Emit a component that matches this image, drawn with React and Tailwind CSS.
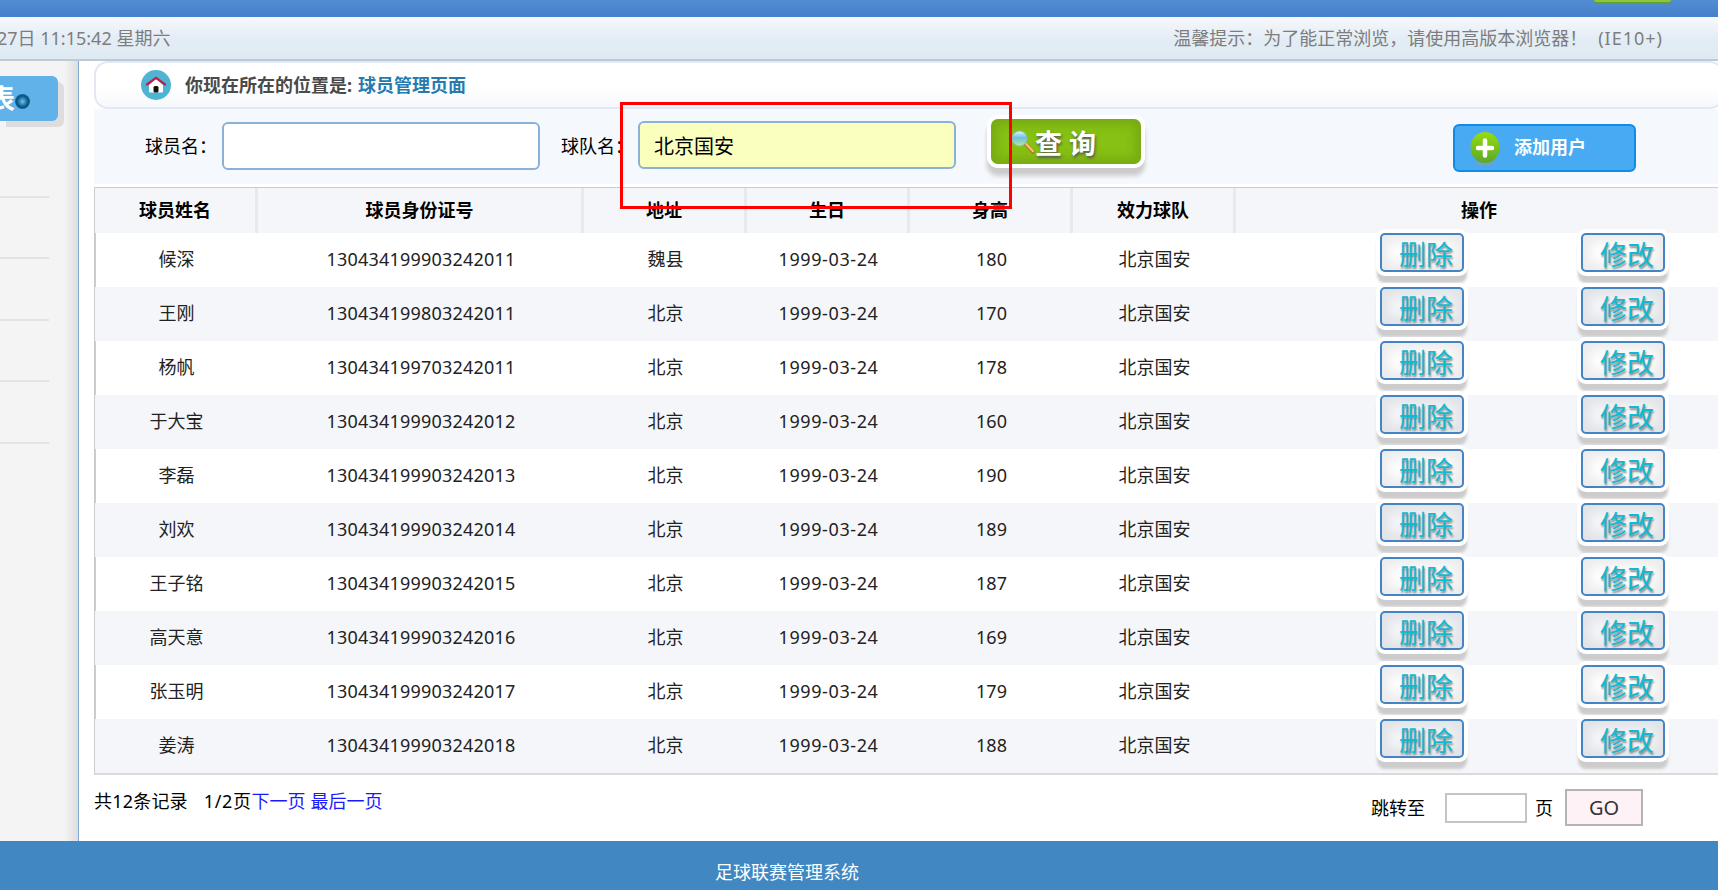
import React, { useState } from 'react';

const players = [
  { name: '候深', idCard: '130434199903242011', address: '魏县', birthday: '1999-03-24', height: 180 },
  { name: '王刚', idCard: '130434199803242011', address: '北京', birthday: '1999-03-24', height: 170 },
  { name: '杨帆', idCard: '130434199703242011', address: '北京', birthday: '1999-03-24', height: 178 },
  { name: '于大宝', idCard: '130434199903242012', address: '北京', birthday: '1999-03-24', height: 160 },
  { name: '李磊', idCard: '130434199903242013', address: '北京', birthday: '1999-03-24', height: 190 },
  { name: '刘欢', idCard: '130434199903242014', address: '北京', birthday: '1999-03-24', height: 189 },
  { name: '王子铭', idCard: '130434199903242015', address: '北京', birthday: '1999-03-24', height: 187 },
  { name: '高天意', idCard: '130434199903242016', address: '北京', birthday: '1999-03-24', height: 169 },
  { name: '张玉明', idCard: '130434199903242017', address: '北京', birthday: '1999-03-24', height: 179 },
  { name: '姜涛', idCard: '130434199903242018', address: '北京', birthday: '1999-03-24', height: 188 },
];

const headers = ['球员姓名', '球员身份证号', '地址', '生日', '身高', '效力球队'];

// Shared column template for the header and the body rows
const rowGrid = 'grid grid-cols-[163px_326px_163px_163px_163px_163px_1fr]';

const HomeIcon = () => (
  <svg className="h-[30px] w-[30px] shrink-0" viewBox="0 0 30 30">
    <circle cx="15" cy="15" r="15" fill="#4fb4d3" />
    <path d="M8 15 15 9l7 6v6.500a1 1 0 0 1-1 1H9a1 1 0 0 1-1-1z" fill="#fff" />
    <path d="M5.200 15 15 7.800l9.800 7.200" fill="none" stroke="#c01f45" strokeWidth="2.200" />
    <rect x="12.500" y="16" width="5" height="6.500" rx="1.500" fill="#111" />
  </svg>
);

const SearchIcon = () => (
  <svg className="h-6 w-6 shrink-0" viewBox="0 0 24 24">
    <defs>
      <linearGradient id="lens" x1="0" y1="0" x2="0" y2="1">
        <stop offset="0" stopColor="#e4f5fd" />
        <stop offset="0.450" stopColor="#6fbfe0" />
        <stop offset="1" stopColor="#b5ec9a" />
      </linearGradient>
    </defs>
    <path d="m15 14.500 7 7.500" stroke="#b9762c" strokeWidth="4" strokeLinecap="round" />
    <path d="m15 13.800 7 7.500" stroke="#f8c573" strokeWidth="2" strokeLinecap="round" />
    <circle cx="8.500" cy="8.500" r="7.500" fill="url(#lens)" stroke="#8fb9c9" strokeWidth="1" />
  </svg>
);

const AddIcon = () => (
  <svg className="h-[34px] w-[30px] shrink-0" viewBox="0 0 30 34">
    <defs>
      <linearGradient id="add" x1="0" y1="0" x2="0" y2="1">
        <stop offset="0" stopColor="#97dc10" />
        <stop offset="1" stopColor="#5aa827" />
      </linearGradient>
    </defs>
    <ellipse cx="15" cy="32.500" rx="12" ry="1.500" fill="#7b9fb8" />
    <ellipse cx="15" cy="16.500" rx="14.500" ry="15.500" fill="url(#add)" />
    <path d="M15 9.500v15M8 17h14" stroke="#fff" strokeWidth="4.500" strokeLinecap="round" />
  </svg>
);

const ActionButton = ({ label }) => (
  <button className="h-[39px] w-[84px] rounded-[5px] border-2 border-[#4484c4] pl-2 text-[27px] leading-[39px] text-[#12b9d3] [text-shadow:1px_2px_2px_#888] shadow-[0_0_0_4px_#fff,0_8px_3px_3px_#ccc,inset_0_0_12px_7px_rgba(0,0,0,0.08)]">
    {label}
  </button>
);

const Sidebar = () => (
  <aside className="flex w-[79px] shrink-0 flex-col border-r border-[#7fa9d4] bg-[linear-gradient(to_right,#f4f4f4_64px,#dcdedd_78px)]">
    <div className="mt-[15px] flex h-[45px] w-[58px] shrink-0 items-center justify-end rounded-r-[6px] bg-[#60b2e8] pr-[28px] text-[27px] font-bold text-white shadow-[6px_6px_0_#dddddd]">
      <span>表</span>
      <span className="mt-[6px] h-[15px] w-[15px] shrink-0 rounded-full bg-[radial-gradient(circle,#7cc0e8_0%,#2f85b8_30%,#07527f_55%,#1b6ea5_75%)]" />
    </div>
    <ul className="mt-[15px] w-[49px]">
      {[0, 1, 2, 3, 4].map((item) => (
        <li key={item} className="h-[61.500px] border-b-2 border-[#e3e3e3]" />
      ))}
    </ul>
  </aside>
);

const App = () => {
  const [playerName, setPlayerName] = useState('');
  const [teamName, setTeamName] = useState('北京国安');
  const [page, setPage] = useState('');

  return (
    <div className="relative flex h-[890px] w-[1718px] flex-col overflow-hidden bg-white font-['Noto_Sans','Noto_Sans_CJK_SC',sans-serif] text-[18px] leading-6 text-black">
      {/* Bottom edge of the banner */}
      <div className="flex h-[17px] shrink-0 items-start justify-end bg-linear-to-b from-[#508dd2] to-[#467fcb] pr-[47px]">
        <div className="h-1 w-[77px] rounded-b-[5px] border-b-2 border-[#64a12c] bg-[#8cc63e]" />
      </div>

      <header className="flex h-[44px] shrink-0 items-center justify-between border-b-2 border-[#bcc9d6] bg-[linear-gradient(to_bottom,#f7f8fc,#e4edf5_50%,#deeaf2)] pr-[55px] text-[#7d7d7d]">
        <span className="-ml-[3px] whitespace-nowrap">27日 11:15:42 星期六</span>
        <span className="whitespace-nowrap">
          温馨提示：为了能正常浏览，请使用高版本浏览器！
          <span className="ml-[11px] tracking-[1px]">(IE10+)</span>
        </span>
      </header>

      <div className="flex h-[780px] shrink-0">
        <Sidebar />

        <main className="ml-[15px] flex min-w-0 flex-1 flex-col">
          <div className="-mr-[6px] flex h-12 shrink-0 items-center rounded-[14px] border-2 border-[#e4e8f5] bg-[linear-gradient(to_bottom,#fff_55%,#f5f8fc)] pl-[45px] font-bold">
            <HomeIcon />
            <span className="ml-[14px] text-[#4a4a4a]">你现在所在的位置是:</span>
            <span className="ml-[6px] text-[#267bad]">球员管理页面</span>
          </div>

          <div className="flex h-[75px] shrink-0 items-center bg-[#f5f9fd] pl-[51px]">
            <label className="-mt-[2px] w-[77px]">球员名：</label>
            <input
              className="-mt-[1px] h-12 w-[318px] rounded-[6px] border-2 border-[#8ab2d8] bg-white px-[14px]"
              value={playerName}
              onChange={(e) => setPlayerName(e.target.value)}
            />
            <label className="-mt-[2px] ml-[21px] w-[77px]">球队名：</label>
            <input
              className="-mt-[3px] h-12 w-[318px] rounded-[6px] border-2 border-[#8ab2d8] bg-[#faffbd] px-[14px] text-[20px]"
              value={teamName}
              onChange={(e) => setTeamName(e.target.value)}
            />
            <button className="-mt-[10px] ml-[35px] flex h-[45px] w-[150px] items-center rounded-[7px] bg-[#86c113] pl-[20px] text-[27px] font-bold text-white shadow-[0_0_0_4px_#fff,0_8px_4px_4px_#ccc,inset_0_0_10px_6px_rgba(90,120,20,0.3)] [text-shadow:1px_2px_3px_#555]">
              <SearchIcon />
              <span className="pt-[4px]">查 询</span>
            </button>
            <button className="ml-[312px] mt-[3px] flex h-[48px] w-[183px] items-center rounded-[6px] border-2 border-[#128be3] bg-[#48aaf2] pl-[15px] text-[18px] font-bold text-white">
              <AddIcon />
              <span className="-mt-[2px] ml-[14px]">添加用户</span>
            </button>
          </div>

          <section className="mt-[3px] flex shrink-0 flex-col border-b-2 border-l border-t border-[#cccccc] border-b-[#d9dadc]">
            <div className={`${rowGrid} h-[45px] bg-[#f5f6f9] text-center font-bold leading-[45px]`}>
              {headers.map((header) => (
                <div key={header} className="border-r-[3px] border-[#e8e9eb]">{header}</div>
              ))}
              <div className="pl-[4px]">操作</div>
            </div>
            {players.map((player, index) => (
              <div
                key={player.idCard}
                className={`${rowGrid} h-[54px] text-center leading-[52px] text-[#222] ${
                  index % 2 === 0 ? 'bg-white shadow-[inset_1px_0_0_#ccc]' : 'bg-[#f5f6f9]'
                }`}
              >
                <div>{player.name}</div>
                <div className="tracking-[0.2px]">{player.idCard}</div>
                <div>{player.address}</div>
                <div className="tracking-[0.6px]">{player.birthday}</div>
                <div>{player.height}</div>
                <div>北京国安</div>
                <div className="flex items-start gap-[117px] pl-[144px]">
                  <ActionButton label="删除" />
                  <ActionButton label="修改" />
                </div>
              </div>
            ))}
          </section>

          <div className="flex justify-between pr-[75px]">
            <div className="mt-[14px] flex">
              <span className="tracking-[0.2px]">共12条记录</span>
              <span className="ml-[16px] tracking-[0.6px]">1/2页</span>
              <a className="text-[#1a1aff]">下一页</a>
              <a className="ml-[5px] text-[#1a1aff]">最后一页</a>
            </div>
            <div className="mt-[15px] flex items-center">
              <span>跳转至</span>
              <input
                className="ml-[20px] h-[30px] w-[82px] border-2 border-[#c4c4c4] bg-white px-1"
                value={page}
                onChange={(e) => setPage(e.target.value)}
              />
              <span className="ml-[8px]">页</span>
              <button className="-mt-[1px] ml-[12px] h-[37px] w-[78px] border-2 border-[#b4b4b4] bg-[#fff2f7] text-[20px] text-[#333]">GO</button>
            </div>
          </div>
        </main>
      </div>

      <footer className="flex h-[49px] shrink-0 justify-center bg-[#4187c2] pt-[19px] text-white">
        <span className="mr-[144px]">足球联赛管理系统</span>
      </footer>

      {/* Highlight frame around the team filter */}
      <div className="pointer-events-none absolute left-[620px] top-[102px] h-[107px] w-[392px] border-[3px] border-[#ff0000]" />
    </div>
  );
};

export default App;
